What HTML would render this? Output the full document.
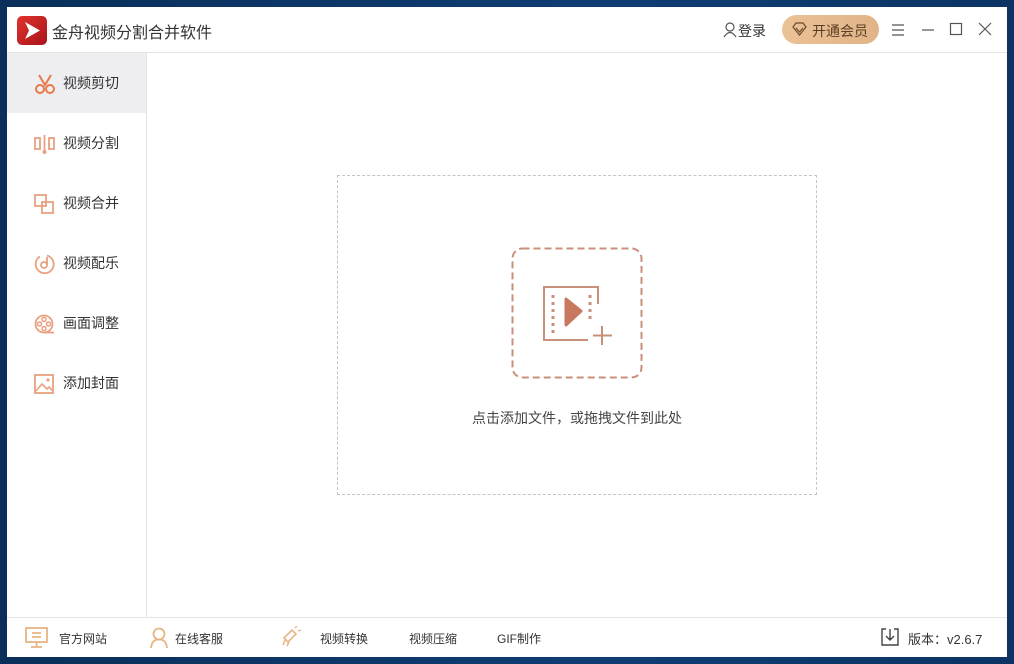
<!DOCTYPE html>
<html><head><meta charset="utf-8"><style>
*{margin:0;padding:0;box-sizing:border-box}
body{width:1014px;height:664px;background:linear-gradient(90deg,#0a2f5a,#0f3d73 60%,#0b3463);position:relative;overflow:hidden;font-family:"Liberation Sans","Noto Sans CJK SC",sans-serif;color:#333}
#win{position:absolute;left:7px;top:7px;width:1000px;height:650px;background:#fff}
.title{position:absolute;left:0;top:0;width:1000px;height:46px;border-bottom:1px solid #e4e4e4}
.logo{position:absolute;left:10px;top:9px;width:30px;height:29px;border-radius:5px;background:linear-gradient(135deg,#e0322e,#a8151a)}
.ttext{position:absolute;left:45px;top:12px;font-size:16px;color:#333}
.side{position:absolute;left:0;top:46px;width:140px;height:564px;border-right:1px solid #e4e4e4}
.item{position:absolute;left:0;width:139px;height:60px;font-size:14px;color:#333}
.item span{position:absolute;left:56px;top:20px}
.item svg{position:absolute;left:27px;top:20px}
.sel{background:#eeedf0}
.foot{position:absolute;left:0;top:610px;width:1000px;height:40px;border-top:1px solid #e4e4e4;font-size:12px;color:#333}
.foot span{position:absolute;top:12px}
</style></head><body>
<div id="win">
<div class="title">
 <div class="logo"><svg width="30" height="29"><path d="M8 6 L23 14.5 L8 23 L12 14.5Z" fill="#fff"/></svg></div>
 <div class="ttext">金舟视频分割合并软件</div>
 <svg style="position:absolute;left:716px;top:15px" width="14" height="16"><circle cx="7" cy="5" r="4" fill="none" stroke="#555" stroke-width="1.2"/><path d="M1 15 Q7 6 13 15" fill="none" stroke="#555" stroke-width="1.2"/></svg>
 <div style="position:absolute;left:731px;top:14px;font-size:14px;color:#333">登录</div>
 <div style="position:absolute;left:775px;top:8px;width:97px;height:29px;border-radius:15px;background:linear-gradient(90deg,#ebc196,#e0b487);"></div>
 <svg style="position:absolute;left:785px;top:15px" width="15" height="14"><path d="M1 5 L4 1 H11 L14 5 L7.5 13Z M4 6 L7.5 10 L11 6" fill="none" stroke="#6b4b2e" stroke-width="1.2"/></svg>
 <div style="position:absolute;left:805px;top:14px;font-size:14px;color:#5a3e24">开通会员</div>
 <svg style="position:absolute;left:884px;top:16px" width="14" height="14"><path d="M1 2H13M1 7H13M1 12H13" stroke="#555" stroke-width="1.2"/></svg>
 <svg style="position:absolute;left:914px;top:16px" width="14" height="14"><path d="M1 7H13" stroke="#555" stroke-width="1.2"/></svg>
 <svg style="position:absolute;left:942px;top:15px" width="14" height="14"><rect x="1.5" y="1.5" width="11" height="11" fill="none" stroke="#555" stroke-width="1.2"/></svg>
 <svg style="position:absolute;left:971px;top:15px" width="14" height="14"><path d="M1 1L13 13M13 1L1 13" stroke="#555" stroke-width="1.2"/></svg>
</div>
<div class="side">
 <div class="item sel" style="top:0"><svg width="22" height="22"><path d="M5 2 L11 12 L17 2" fill="none" stroke="#e77a4a" stroke-width="2"/><circle cx="6" cy="16" r="4" fill="none" stroke="#e77a4a" stroke-width="2"/><circle cx="16" cy="16" r="4" fill="none" stroke="#e77a4a" stroke-width="2"/></svg><span>视频剪切</span></div>
 <div class="item" style="top:60px"><svg width="22" height="22"><rect x="1" y="5" width="5" height="11" fill="none" stroke="#e8a07f" stroke-width="1.8"/><rect x="15" y="5" width="5" height="11" fill="none" stroke="#e8a07f" stroke-width="1.8"/><path d="M10.5 2V20" stroke="#e8a07f" stroke-width="1.8"/><circle cx="10.5" cy="19" r="2" fill="#e8a07f"/></svg><span>视频分割</span></div>
 <div class="item" style="top:120px"><svg width="22" height="22"><rect x="1" y="2" width="11" height="11" fill="none" stroke="#e8a07f" stroke-width="1.8"/><rect x="8" y="9" width="11" height="11" fill="none" stroke="#e8a07f" stroke-width="1.8"/></svg><span>视频合并</span></div>
 <div class="item" style="top:180px"><svg width="22" height="22"><path d="M13 2.5 A9 9 0 1 1 6 3.5" fill="none" stroke="#e8a07f" stroke-width="1.8"/><circle cx="10" cy="12" r="3" fill="none" stroke="#e8a07f" stroke-width="1.8"/><path d="M13 12V4" stroke="#e8a07f" stroke-width="1.8"/></svg><span>视频配乐</span></div>
 <div class="item" style="top:240px"><svg width="22" height="22"><circle cx="10" cy="11" r="8.5" fill="none" stroke="#e8a07f" stroke-width="1.8"/><circle cx="10" cy="6.5" r="2" fill="none" stroke="#e8a07f" stroke-width="1.5"/><circle cx="10" cy="15.5" r="2" fill="none" stroke="#e8a07f" stroke-width="1.5"/><circle cx="5.5" cy="11" r="2" fill="none" stroke="#e8a07f" stroke-width="1.5"/><circle cx="14.5" cy="11" r="2" fill="none" stroke="#e8a07f" stroke-width="1.5"/><path d="M10 19.5H20" stroke="#e8a07f" stroke-width="1.8"/></svg><span>画面调整</span></div>
 <div class="item" style="top:300px"><svg width="22" height="22"><rect x="1" y="2" width="18" height="18" fill="none" stroke="#e8a07f" stroke-width="1.8"/><path d="M2 18 L8 11 L13 16 L15 14 L19 18" fill="none" stroke="#e8a07f" stroke-width="1.6"/><circle cx="14" cy="7" r="1.6" fill="#e8a07f"/></svg><span>添加封面</span></div>
</div>
<div style="position:absolute;left:330px;top:168px;width:480px;height:320px;border:1px dashed #c4c4c4"></div>
<svg style="position:absolute;left:504px;top:240px" width="132" height="132"><rect x="1.5" y="1.5" width="129" height="129" rx="10" fill="none" stroke="#c8907a" stroke-width="2" stroke-dasharray="7 4"/>
<path d="M87 57V40H33V93H77" fill="none" stroke="#c8907a" stroke-width="2"/>
<path d="M42 48V90M79 48V75" stroke="#c8907a" stroke-width="3" stroke-dasharray="3 4"/>
<path d="M55 52 L70 64 L55 78Z" fill="#c8785e" stroke="#c8785e" stroke-width="3" stroke-linejoin="round"/>
<path d="M91 79V98M82 88.5H101" stroke="#c8907a" stroke-width="2"/></svg>
<div style="position:absolute;left:330px;top:401px;width:480px;text-align:center;font-size:14px;color:#444">点击添加文件，或拖拽文件到此处</div>
<div class="foot">
 <svg style="position:absolute;left:18px;top:9px" width="24" height="22"><rect x="1" y="1" width="21" height="14" fill="none" stroke="#e7b583" stroke-width="1.8"/><path d="M7 6H16M7 10H16M11.5 15V19M6 20H17" stroke="#e7b583" stroke-width="1.8"/></svg>
 <span style="left:52px">官方网站</span>
 <svg style="position:absolute;left:142px;top:9px" width="20" height="22"><circle cx="10" cy="7" r="5.5" fill="none" stroke="#e7b583" stroke-width="1.8"/><path d="M2 21 Q3 12 10 12.5 Q17 12 18 21" fill="none" stroke="#e7b583" stroke-width="1.8"/></svg>
 <span style="left:168px">在线客服</span>
 <svg style="position:absolute;left:273px;top:8px" width="22" height="22"><path d="M4 12 L12 4 L16 8 L8 16Z M5 14 L3 19 M9 16 L7 20" fill="none" stroke="#e7b583" stroke-width="1.6"/><path d="M15 2 L17 0M18 5 L21 4" stroke="#e7b583" stroke-width="1.4"/></svg>
 <span style="left:313px">视频转换</span>
 <span style="left:402px">视频压缩</span>
 <span style="left:490px">GIF制作</span>
 <svg style="position:absolute;left:874px;top:10px" width="18" height="18"><path d="M5 1H1V17H17V1H13M9 1V12M5 8L9 12L13 8" fill="none" stroke="#444" stroke-width="1.4"/></svg>
 <span style="left:901px;font-size:13px;top:11px">版本：v2.6.7</span>
</div>
</div>
</body></html>
